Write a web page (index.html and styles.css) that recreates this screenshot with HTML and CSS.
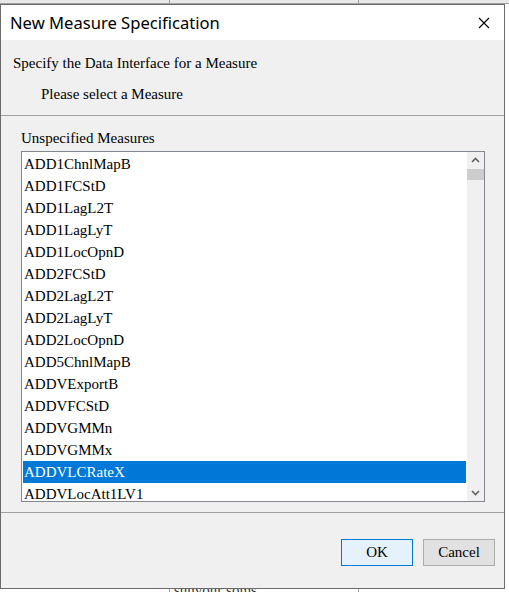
FILE: index.html
```html
<!DOCTYPE html>
<html>
<head>
  <meta charset="UTF-8">
  <title>New Measure Specification</title>
  <link rel="stylesheet" href="styles.css">
</head>
<body>
  <div class="backdrop-text">sunvour soms</div>

  <div class="dialog">
    <div class="titlebar">
      <div class="title">New Measure Specification</div>
      <svg class="close" width="12" height="12" viewBox="0 0 12 12">
        <path d="M1 1 L11 11 M11 1 L1 11" stroke="#000" stroke-width="1.1" fill="none"/>
      </svg>
    </div>

    <div class="intro">
      <div class="intro-title">Specify the Data Interface for a Measure</div>
      <div class="intro-sub">Please select a Measure</div>
    </div>

    <div class="main">
      <div class="list-label">Unspecified Measures</div>
      <div class="listbox">
        <div class="items">
          <div class="item">ADD1ChnlMapB</div>
          <div class="item">ADD1FCStD</div>
          <div class="item">ADD1LagL2T</div>
          <div class="item">ADD1LagLyT</div>
          <div class="item">ADD1LocOpnD</div>
          <div class="item">ADD2FCStD</div>
          <div class="item">ADD2LagL2T</div>
          <div class="item">ADD2LagLyT</div>
          <div class="item">ADD2LocOpnD</div>
          <div class="item">ADD5ChnlMapB</div>
          <div class="item">ADDVExportB</div>
          <div class="item">ADDVFCStD</div>
          <div class="item">ADDVGMMn</div>
          <div class="item">ADDVGMMx</div>
          <div class="item selected">ADDVLCRateX</div>
          <div class="item">ADDVLocAtt1LV1</div>
        </div>
        <div class="scrollbar">
          <svg class="arrow" width="17" height="17" viewBox="0 0 17 17">
            <path d="M5 10 L8.5 6.5 L12 10" stroke="#606060" stroke-width="1.6" fill="none"/>
          </svg>
          <div class="thumb"></div>
          <div class="track"></div>
          <svg class="arrow" width="17" height="17" viewBox="0 0 17 17">
            <path d="M5 7 L8.5 10.5 L12 7" stroke="#606060" stroke-width="1.6" fill="none"/>
          </svg>
        </div>
      </div>
    </div>

    <div class="footer">
      <button class="btn btn-default">OK</button>
      <button class="btn">Cancel</button>
    </div>
  </div>
</body>
</html>
```

FILE: styles.css
```css
* {
  margin: 0;
  padding: 0;
  box-sizing: border-box;
}

body {
  width: 509px;
  height: 592px;
  overflow: hidden;
  position: relative;
  font-family: "Liberation Serif", "Times New Roman", serif;
  color: #000;
  background-color: #fff;
  background-image:
    linear-gradient(to right, transparent 169px, #a0a0a0 169px, #a0a0a0 170px, transparent 170px,
      transparent 358px, #a0a0a0 358px, #a0a0a0 359px, transparent 359px),
    linear-gradient(to bottom, #e8e8e8 0, #e8e8e8 3px, #a0a0a0 3px, #a0a0a0 4px, transparent 4px);
}

.backdrop-text {
  position: absolute;
  left: 174px;
  top: 582px;
  font-size: 15px;
  color: #333;
}

.dialog {
  position: relative;
  margin-top: 4px;
  width: 505px;
  height: 585px;
  background: #f0f0f0;
  border: 1px solid #6b6b6b;
  display: flex;
  flex-direction: column;
}

.titlebar {
  height: 35px;
  background: #fff;
  display: flex;
  align-items: center;
  justify-content: space-between;
  padding: 0 14px 0 9px;
}

.title {
  font-family: "Noto Sans", "Open Sans", sans-serif;
  font-size: 16.6px;
  color: #000;
}

.close {
  margin-top: 1px;
}

.intro {
  height: 76px;
  border-bottom: 1px solid #a0a0a0;
  padding: 15px 0 0 12px;
  font-size: 15px;
}

.intro-sub {
  margin: 14px 0 0 28px;
}

.main {
  height: 397px;
  border-bottom: 1px solid #a0a0a0;
  padding: 14px 0 0 20px;
}

.list-label {
  font-size: 15px;
  margin-bottom: 4px;
}

.listbox {
  width: 464px;
  height: 351px;
  background: #fff;
  border: 1px solid #828790;
  display: flex;
}

.items {
  flex: 1;
  padding: 1px 1px 0 1px;
  overflow: hidden;
}

.item {
  height: 22px;
  line-height: 22px;
  font-size: 15px;
  padding-left: 1px;
  white-space: nowrap;
}

.item.selected {
  background: #0078d7;
  color: #fff;
}

.scrollbar {
  width: 17px;
  background: #f0f0f0;
  display: flex;
  flex-direction: column;
}

.arrow {
  display: block;
}

.thumb {
  height: 11px;
  background: #cdcdcd;
}

.track {
  flex: 1;
}

.footer {
  flex: 1;
  display: flex;
  justify-content: flex-end;
  align-items: flex-start;
  gap: 10px;
  padding: 26px 9px 0 0;
}

.btn {
  width: 72px;
  height: 27px;
  font-family: "Liberation Serif", "Times New Roman", serif;
  font-size: 15px;
  color: #000;
  background: #e1e1e1;
  border: 1px solid #adadad;
}

.btn-default {
  background: #e5f1fb;
  border-color: #0078d7;
}
```
